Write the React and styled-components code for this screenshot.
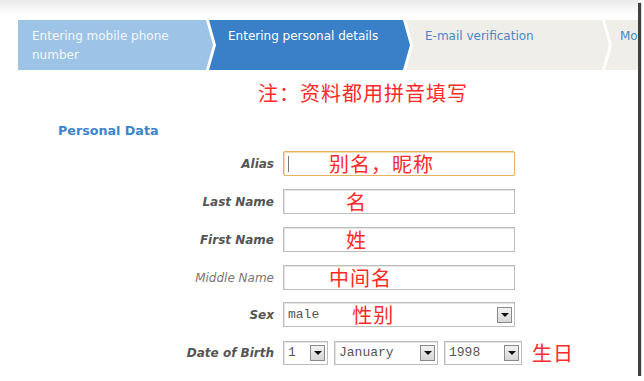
import styled, { createGlobalStyle } from "styled-components";

const Global = createGlobalStyle`
  html, body {
    margin: 0;
    padding: 0;
    background: #fff;
  }
  body {
    font-family: "DejaVu Sans", Verdana, sans-serif;
  }
`;

const steps = [
  { label: "Entering mobile phone number", width: 195, state: "done" },
  { label: "Entering personal details", width: 201, state: "active" },
  { label: "E-mail verification", width: 203, state: "todo" },
  { label: "Mobile verification", width: 33, state: "todo" },
];

const stepColors = {
  done: { bg: "#9dc3e6", fg: "#f3f8fd" },
  active: { bg: "#3a80c8", fg: "#ffffff" },
  todo: { bg: "#efeee8", fg: "#4a86c8" },
};

const stepShape = ({ $w, $first, $last }) => {
  if ($first) return `polygon(0 0, ${$w - 7}px 0, ${$w}px 50%, ${$w - 7}px 100%, 0 100%)`;
  if ($last) return `polygon(0 0, 100% 0, 100% 100%, 0 100%, 7px 50%)`;
  return `polygon(0 0, ${$w - 7}px 0, ${$w}px 50%, ${$w - 7}px 100%, 0 100%, 7px 50%)`;
};

const Frame = styled.div`
  width: 638px;
  height: 376px;
  overflow: hidden;
  background: linear-gradient(#e9e9e9 0px, #f6f6f6 8px, #ffffff 16px);
  box-shadow: 3px 3px 1px rgba(30, 30, 30, 0.85);
`;

const StepBar = styled.div`
  display: flex;
  margin: 20px 0 0 18px;
  height: 50px;
  overflow: hidden;
`;

const Step = styled.div`
  flex: none;
  width: ${(p) => p.$w}px;
  height: 50px;
  margin-left: ${(p) => (p.$first ? 0 : -4)}px;
  padding: 7px 0 0 ${(p) => (p.$first ? 14 : p.$last ? 15 : 19)}px;
  box-sizing: border-box;
  overflow: hidden;
  background: ${(p) => stepColors[p.$state].bg};
  color: ${(p) => stepColors[p.$state].fg};
  font-size: 12px;
  line-height: 19px;
  clip-path: ${stepShape};
  white-space: ${(p) => (p.$first ? "normal" : "nowrap")};
`;

const StepText = styled.span`
  display: block;
  width: 165px;
  max-width: 100%;
  overflow: hidden;
`;

const RedNote = styled.div`
  margin: 9px 0 0 258px;
  font-family: "Noto Sans CJK SC", sans-serif;
  font-size: 20px;
  line-height: 28px;
  color: #ff2a2a;
  letter-spacing: 1px;
`;

const SectionTitle = styled.div`
  margin: 16px 0 0 58px;
  font-size: 12.7px;
  font-weight: bold;
  line-height: 16px;
  color: #3a85cc;
`;

const Form = styled.div`
  display: flex;
  flex-direction: column;
  gap: 13px;
  margin-top: 12px;
`;

const Row = styled.div`
  display: flex;
  align-items: center;
  height: 25px;
  margin-top: ${(p) => p.$extra || 0}px;
`;

const Label = styled.div`
  width: 274px;
  margin-right: 9px;
  text-align: right;
  font-size: 12px;
  font-style: italic;
  font-weight: ${(p) => (p.$light ? "normal" : "bold")};
  color: ${(p) => (p.$light ? "#777" : "#555")};
`;

const Input = styled.div`
  position: relative;
  display: flex;
  align-items: center;
  width: 232px;
  height: 25px;
  box-sizing: border-box;
  border: 1px solid ${(p) => (p.$focus ? "#e0b463" : "#bdbdbd")};
  border-radius: ${(p) => (p.$focus ? 2 : 0)}px;
  box-shadow: inset 1px 1px 0 ${(p) => (p.$focus ? "#f3dcae" : "#e4e4e4")};
  background: #fff;
`;

const Caret = styled.span`
  position: absolute;
  left: 4px;
  top: 4px;
  width: 1px;
  height: 16px;
  background: #777;
`;

const Note = styled.span`
  margin-left: ${(p) => p.$at}px;
  font-family: "Noto Sans CJK SC", sans-serif;
  font-size: 20px;
  line-height: 25px;
  color: #ff2a2a;
  letter-spacing: 1px;
  white-space: nowrap;
`;

const Selects = styled.div`
  display: flex;
  align-items: center;
  gap: 6px;
`;

const Select = styled.div`
  display: flex;
  align-items: center;
  width: ${(p) => p.$w}px;
  height: ${(p) => p.$h || 24}px;
  box-sizing: border-box;
  padding-left: 4px;
  border: 1px solid #bdbdbd;
  box-shadow: inset 1px 1px 0 #e4e4e4;
  background: #fff;
  font-family: "Liberation Mono", "Courier New", monospace;
  font-size: 13px;
  color: #555;
`;

const Value = styled.span`
  flex: 1;
  display: flex;
  align-items: center;
  line-height: 16px;
`;

const Arrow = styled.span`
  display: flex;
  align-items: center;
  justify-content: center;
  width: 15px;
  height: 16px;
  margin-right: 2px;
  box-sizing: border-box;
  border: 1px solid #8a8a8a;
  background: linear-gradient(#f2f2f2, #d6d6d6);
  &::after {
    content: "";
    border-left: 4px solid transparent;
    border-right: 4px solid transparent;
    border-top: 4px solid #111;
  }
`;

const SideNote = styled(Note)`
  margin-left: 10px;
`;

const textFields = [
  { label: "Alias", note: "别名，昵称", at: 45, focus: true },
  { label: "Last Name", note: "名", at: 62 },
  { label: "First Name", note: "姓", at: 62 },
  { label: "Middle Name", note: "中间名", at: 45, light: true },
];

export default function App() {
  return (
    <>
      <Global />
      <Frame>
        <StepBar>
          {steps.map((s, i) => (
            <Step
              key={s.label}
              $w={s.width}
              $state={s.state}
              $first={i === 0}
              $last={i === steps.length - 1}
            >
              <StepText>{s.label}</StepText>
            </Step>
          ))}
        </StepBar>

        <RedNote>注：资料都用拼音填写</RedNote>

        <SectionTitle>Personal Data</SectionTitle>

        <Form>
          {textFields.map((f) => (
            <Row key={f.label}>
              <Label $light={f.light}>{f.label}</Label>
              <Input $focus={f.focus}>
                {f.focus && <Caret />}
                <Note $at={f.at}>{f.note}</Note>
              </Input>
            </Row>
          ))}

          <Row $extra={-1}>
            <Label>Sex</Label>
            <Select $w={232} $h={25}>
              <Value>
                male
                <Note $at={33}>性别</Note>
              </Value>
              <Arrow />
            </Select>
          </Row>

          <Row>
            <Label>Date of Birth</Label>
            <Selects>
              <Select $w={45}>
                <Value>1</Value>
                <Arrow />
              </Select>
              <Select $w={104}>
                <Value>January</Value>
                <Arrow />
              </Select>
              <Select $w={78}>
                <Value>1998</Value>
                <Arrow />
              </Select>
            </Selects>
            <SideNote>生日</SideNote>
          </Row>
        </Form>
      </Frame>
    </>
  );
}
